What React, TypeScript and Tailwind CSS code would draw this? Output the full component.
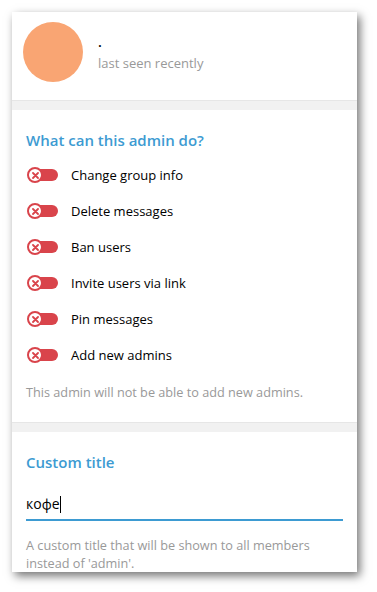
const perms = [
  "Change group info",
  "Delete messages",
  "Ban users",
  "Invite users via link",
  "Pin messages",
  "Add new admins",
];

const OffToggle = () => (
  <div className="relative w-[31px] h-[15px] flex items-center">
    <div className="absolute left-[4px] right-0 h-[12px] rounded-full bg-[#d9444b]" />
    <div className="relative w-[16px] h-[16px] rounded-full bg-white border-2 border-[#d9444b] flex items-center justify-center">
      <svg width="7" height="7" viewBox="0 0 7 7">
        <path d="M1 1L6 6M6 1L1 6" stroke="#d9444b" strokeWidth="1.8" strokeLinecap="round" />
      </svg>
    </div>
  </div>
);

export default function App() {
  return (
    <div
      className="w-[377px] h-[592px] bg-white pt-[12px] pl-[12px]"
      style={{ fontFamily: '"Open Sans", "Noto Sans", sans-serif' }}
    >
      <div className="w-[345px] h-[560px] bg-white flex flex-col overflow-hidden shadow-[3px_4px_9px_rgba(0,0,0,0.55)]">
        {/* header */}
        <div className="h-[88px] shrink-0 flex items-start pt-[10px] pl-[11px] gap-[15px]">
          <div className="w-[60px] h-[60px] rounded-full bg-[#f9a573]" />
          <div className="flex flex-col pt-[10px]">
            <span className="text-[14px] leading-[20px] text-black font-semibold">.</span>
            <span className="text-[13px] leading-[22px] text-[#999]">last seen recently</span>
          </div>
        </div>
        <div className="h-[10px] shrink-0 bg-[#f1f1f1] border-t border-[#e6e6e6]" />

        {/* permissions */}
        <div className="h-[312px] shrink-0 flex flex-col px-[14px] pt-[20px]">
          <div className="text-[15px] leading-[20px] font-semibold text-[#3d9bd2]">
            What can this admin do?
          </div>
          <div className="flex flex-col mt-[1px]">
            {perms.map((p) => (
              <div key={p} className="h-[36px] flex items-center gap-[13px] pl-[1px] pt-[12px]">
                <OffToggle />
                <span className="text-[13px] text-black leading-[18px]">{p}</span>
              </div>
            ))}
          </div>
          <div className="text-[12.7px] leading-[18px] text-[#999] mt-[16px]">
            This admin will not be able to add new admins.
          </div>
        </div>
        <div className="h-[10px] shrink-0 bg-[#f1f1f1] border-t border-[#e6e6e6]" />

        {/* custom title */}
        <div className="shrink-0 flex flex-col px-[14px] pt-[19px]">
          <div className="text-[15px] leading-[22px] font-semibold text-[#3d9bd2]">Custom title</div>
          <div className="mt-[20px] h-[28px] border-b-2 border-[#3d9bd2] flex items-center">
            <span className="text-[14px] text-black leading-[20px] pb-[4px]">кофе</span>
            <span className="w-px h-[17px] bg-black mb-[4px]" />
          </div>
          <div className="text-[12.7px] leading-[18px] text-[#999] mt-[15px]">
            A custom title that will be shown to all members instead of 'admin'.
          </div>
        </div>
      </div>
    </div>
  );
}
